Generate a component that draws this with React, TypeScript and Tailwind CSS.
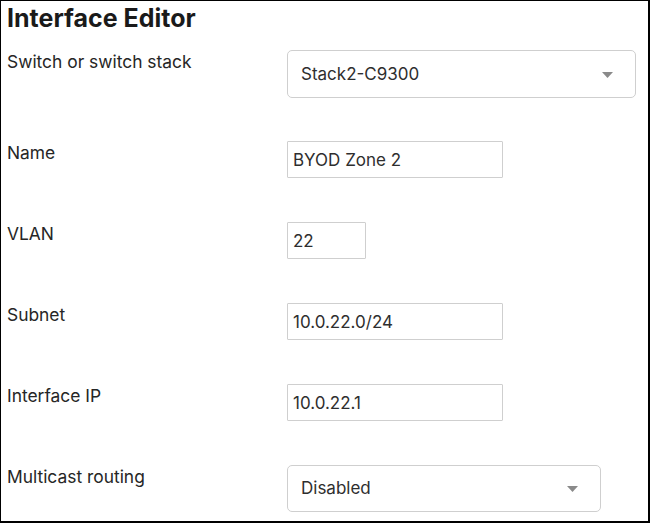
import React from "react";

function Arrow() {
  return (
    <svg width="11" height="6" viewBox="0 0 11 6" className="shrink-0">
      <path d="M0 0 L11 0 L5.5 6 Z" fill="#8a8a8a" />
    </svg>
  );
}

function Label({ children }: { children: React.ReactNode }) {
  return (
    <div className="w-[280px] shrink-0 text-[17.4px] leading-[24px] text-[#262626]">
      {children}
    </div>
  );
}

function Select({ value, width, height }: { value: string; width: string; height: string }) {
  return (
    <div
      className={`${width} ${height} border border-[#cfcfcf] rounded-[5px] pl-[13px] pr-[22px] pt-[1px] flex items-center justify-between text-[17px] text-[#2e2e2e]`}
    >
      <span>{value}</span>
      <Arrow />
    </div>
  );
}

function Input({ value, width }: { value: string; width: string }) {
  return (
    <div
      className={`${width} h-[37px] border border-[#cfcfcf] rounded-[1px] pl-[5px] pt-[2px] flex items-center text-[17px] text-[#2e2e2e]`}
    >
      {value}
    </div>
  );
}

export default function App() {
  return (
    <div className="w-[650px] h-[523px] bg-white border-t border-l border-r-2 border-b-2 border-black pl-[6px] font-['Inter',sans-serif] overflow-hidden">
      <h1 className="text-[25px] font-bold leading-[30px] pt-[2px] text-[#1a1a1a]">Interface Editor</h1>
      <div className="flex flex-col mt-[17px]">
        <div className="flex items-start">
          <Label>Switch or switch stack</Label>
          <Select value="Stack2-C9300" width="w-[349px]" height="h-[48px]" />
        </div>
        <div className="flex items-start mt-[43px]">
          <Label>Name</Label>
          <Input value="BYOD Zone 2" width="w-[216px]" />
        </div>
        <div className="flex items-start mt-[44px]">
          <Label>VLAN</Label>
          <Input value="22" width="w-[79px]" />
        </div>
        <div className="flex items-start mt-[44px]">
          <Label>Subnet</Label>
          <Input value="10.0.22.0/24" width="w-[216px]" />
        </div>
        <div className="flex items-start mt-[44px]">
          <Label>Interface IP</Label>
          <Input value="10.0.22.1" width="w-[216px]" />
        </div>
        <div className="flex items-start mt-[44px]">
          <Label>Multicast routing</Label>
          <Select value="Disabled" width="w-[314px]" height="h-[47px]" />
        </div>
      </div>
    </div>
  );
}
